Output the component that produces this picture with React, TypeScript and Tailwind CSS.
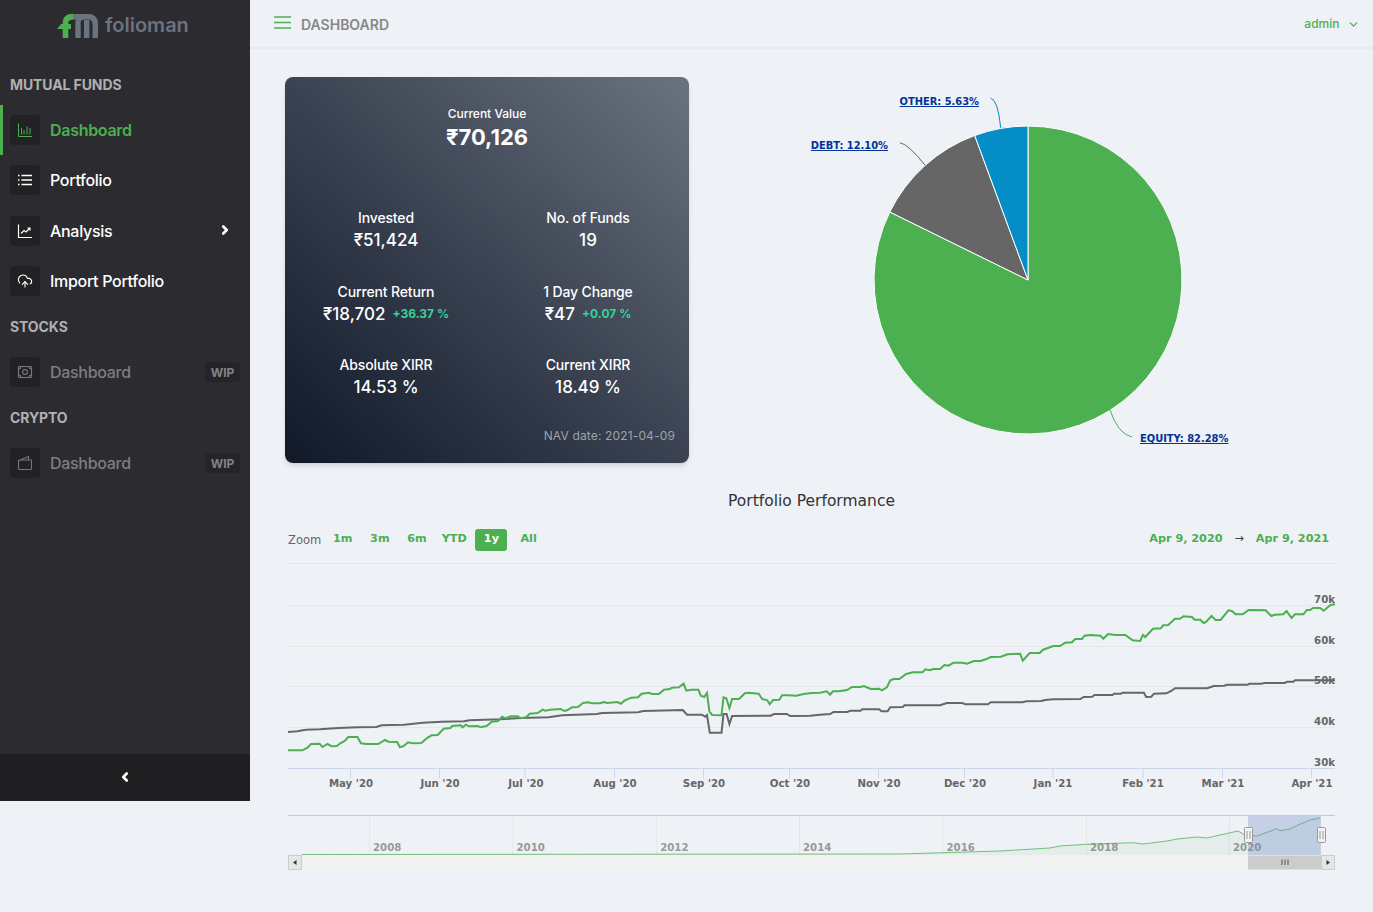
import { CloudUpload, ChevronRight, ChevronLeft, ChevronDown } from "lucide-react";
import type { ReactNode } from "react";

const zl = (a: number[][]) => a.map(([x, y]) => [280 + x / 2.904, 520 + y / 3]);
const zr = (a: number[][]) => a.map(([x, y]) => [820 + x / 2.958, 520 + y / 3]);
const toD = (a: number[][]) => a.map(([x, y], i) => `${i ? "L" : "M"}${x.toFixed(1)} ${y.toFixed(1)}`).join(" ");

const green = [
  ...zl([[23,691],[65,691],[80,683],[90,672],[115,671],[123,681],[138,672],[150,679],[165,678],[175,670],[188,663],[198,651],[225,651],[235,670],[250,672],[285,672],[305,660],[315,665],[340,666],[348,681],[358,679],[372,667],[385,670],[410,669],[430,652],[440,646],[458,645],[475,626],[495,624],[500,618],[525,616],[530,622],[540,614],[548,619],[575,618],[582,622],[600,618],[615,605],[633,603],[645,590],[655,595],[670,589],[690,589],[700,595],[715,592],[725,581],[748,579],[763,569],[770,572],[785,569],[815,567],[825,573],[835,570],[848,562],[865,561],[880,549],[895,547],[905,550],[930,550],[940,546],[950,549],[980,546],[990,551],[1000,542],[1020,533],[1040,532],[1050,521],[1072,518],[1080,522],[1100,522],[1115,509],[1132,507],[1138,503],[1158,502],[1172,491],[1180,512],[1195,509],[1215,509],[1222,527],[1232,531],[1240,519],[1247,575],[1255,585],[1282,586],[1288,532],[1296,535],[1305,564],[1313,537],[1333,537],[1350,520],[1360,518],[1390,521],[1400,537],[1415,541],[1422,553],[1432,540],[1450,539],[1458,526],[1475,526],[1500,527],[1520,522],[1545,519]]),
  ...zr([[0,518],[20,514],[30,524],[38,514],[55,514],[80,510],[95,501],[120,501],[130,498],[150,507],[175,506],[183,511],[198,502],[208,481],[218,477],[235,477],[255,462],[275,457],[303,457],[312,448],[325,451],[335,447],[355,447],[368,435],[380,437],[395,428],[420,428],[435,431],[455,423],[475,423],[490,418],[505,411],[535,410],[555,403],[592,401],[600,422],[620,399],[650,399],[660,389],[690,378],[710,378],[725,368],[745,367],[755,357],[775,357],[782,347],[800,345],[830,347],[838,356],[852,342],[875,345],[903,345],[925,361],[947,363],[955,345],[962,351],[985,326],[1008,325],[1015,316],[1030,315],[1050,296],[1065,296],[1075,289],[1100,291],[1108,299],[1125,299],[1135,309],[1142,306],[1158,288],[1170,300],[1185,300],[1208,271],[1218,273],[1230,283],[1250,283],[1268,270],[1318,271],[1335,288],[1345,284],[1370,283],[1380,273],[1395,294],[1405,283],[1430,283],[1440,270],[1450,270],[1458,264],[1480,264],[1490,272],[1510,255],[1524,253]]),
];
const gray = [
  ...zl([[23,636],[50,634],[75,629],[115,628],[170,624],[225,622],[280,621],[295,616],[360,614],[415,608],[470,605],[535,604],[550,601],[640,598],[700,594],[780,592],[820,586],[920,582],[935,579],[1040,577],[1055,573],[1170,570],[1182,584],[1225,584],[1235,590],[1240,585],[1248,638],[1282,638],[1288,582],[1297,582],[1305,612],[1313,588],[1425,587],[1435,582],[1472,582],[1482,588],[1540,587]]),
  ...zr([[0,584],[30,582],[40,576],[80,576],[90,572],[120,572],[125,568],[175,568],[182,574],[200,574],[208,562],[245,561],[250,556],[355,556],[375,549],[420,549],[430,553],[497,553],[505,547],[600,547],[610,544],[655,543],[665,540],[690,538],[770,537],[780,531],[805,530],[812,525],[865,525],[870,521],[890,521],[895,518],[958,518],[965,531],[980,530],[988,521],[1025,520],[1040,512],[1050,505],[1145,505],[1165,498],[1195,497],[1205,494],[1265,494],[1270,491],[1305,491],[1315,489],[1375,489],[1382,485],[1400,485],[1405,481],[1524,481]]),
];
const nav = [[302,854.5],[900,854],[1000,851],[1050,848],[1060,846],[1086,844.3],[1133,842.7],[1143,844],[1167,841],[1177,839],[1197,837],[1207,838],[1217,835.7],[1238,831],[1245,835],[1257,836],[1277,828.7],[1280,830.7],[1290,829],[1298,825],[1310,820],[1320,818]];

const xLabels = [["May '20",351,350.5],["Jun '20",440,439.5],["Jul '20",526,525],["Aug '20",615,614.5],["Sep '20",704,703.5],["Oct '20",790,789.5],["Nov '20",879,878.5],["Dec '20",965,964.5],["Jan '21",1053,1053],["Feb '21",1143,1143],["Mar '21",1223,1222.5],["Apr '21",1312,1311.5]] as [string, number, number][];
const yLabels = [["70k",603],["60k",644],["50k",684],["40k",725],["30k",766]] as [string, number][];
const navYears = [["2008",369.5],["2010",513],["2012",656.7],["2014",799.5],["2016",943],["2018",1086.5],["2020",1229.5]] as [string, number][];

function pt(deg: number, r = 154) {
  const t = (deg * Math.PI) / 180;
  return `${(1028 + r * Math.sin(t)).toFixed(2)} ${(280 - r * Math.cos(t)).toFixed(2)}`;
}
function slice(a: number, b: number) {
  return `M1028 280 L${pt(a)} A154 154 0 ${b - a > 180 ? 1 : 0} 1 ${pt(b)} Z`;
}

function Row({ icon, label, active, right, disabled, extra }: { icon: ReactNode; label: string; active?: boolean; right?: ReactNode; disabled?: boolean; extra?: string }) {
  const tone = active ? "text-[#4caf50] font-semibold tracking-[-0.3px]" : disabled ? "text-[#7e7e82] font-medium tracking-[-0.3px]" : "text-white font-medium tracking-[-0.3px]";
  const bar = active ? "border-[#4caf50]" : "border-transparent";
  return (
    <div className={`flex h-[50px] items-center border-l-[3px] pl-[7px] pr-[10px] ${bar} ${extra ?? ""}`}>
      <div className={`flex h-[30px] w-[30px] items-center justify-center rounded bg-[#222225] ${active ? "text-[#4caf50]" : disabled ? "text-[#77777b]" : "text-white"}`}>{icon}</div>
      <span className={`ml-[10px] text-base ${tone}`}>{label}</span>
      <div className="ml-auto">{right}</div>
    </div>
  );
}
const Wip = () => <span className="flex h-5 w-[35px] items-center justify-center rounded bg-[#252528] pt-px text-xs font-bold text-[#828286]">WIP</span>;
const Section = ({ children, h }: { children: string; h: string }) => (
  <div className={`flex items-center pl-[10px] text-sm font-bold tracking-[-0.1px] text-[#b0b0b2] ${h}`}>{children}</div>
);

function Stat({ label, value, pct }: { label: string; value: string; pct?: string }) {
  return (
    <div className="text-center">
      <div className="text-sm font-medium leading-5 tracking-[-0.15px] text-white">{label}</div>
      <div className="flex h-6 items-center justify-center text-white">
        <span className="text-[17px] font-medium leading-6">{value}</span>
        {pct && <span className="ml-[7px] text-xs font-bold leading-6 text-[#34d399]">{pct}</span>}
      </div>
    </div>
  );
}

const chartText = "font-['DejaVu_Sans',sans-serif] font-bold text-[10.2px]";
const pieText = "font-['DejaVu_Sans',sans-serif] font-bold text-[9.9px] fill-[#039] underline";

export default function App() {
  return (
    <div className="flex h-[912px] overflow-hidden bg-[#eef1f6] font-['Inter',sans-serif]">
      <aside className="flex h-[801px] w-[250px] shrink-0 flex-col bg-[#2b2b30]">
        <div className="flex h-[65px] items-start">
          <div className="ml-[57px] mt-[13px] flex items-center">
            <svg width="42" height="25" viewBox="57 13 42 25" fill="none">
              <path d="M71 16.8 H84" stroke="#6b7280" strokeWidth="5.6" />
              <path d="M78 38 V22 Q78 16.8 84 16.8 H88 Q95.3 16.8 95.3 24 V38 M86.7 38 V20" stroke="#6b7280" strokeWidth="5.4" />
              <path d="M65.5 38 V23 Q65.5 16.6 73 16.6" stroke="#4caf50" strokeWidth="5.6" />
              <path d="M57 29 L61 24 H71 V29 Z" fill="#4caf50" />
            </svg>
            <span className="ml-[6px] -mt-px text-[20px] font-semibold leading-[26px] text-[#6b7280]">folioman</span>
          </div>
        </div>
        <Section h="h-10">MUTUAL FUNDS</Section>
        <Row
          active
          label="Dashboard"
          icon={
            <svg width="16" height="16" viewBox="0 0 16 16" fill="none" stroke="currentColor" strokeWidth="1">
              <path d="M1.5 1.5 V14.5 H15 M4.5 6 V12.5 M7 8 V12.5 M10 4.5 V12.5 M13 6 V12.5" />
            </svg>
          }
        />
        <Row
          label="Portfolio"
          icon={
            <svg width="16" height="16" viewBox="0 0 16 16" fill="none" stroke="currentColor" strokeWidth="1.3">
              <path d="M4.5 3.5 H15 M4.5 8 H15 M4.5 12.5 H15 M1 3.5 H2.5 M1 8 H2.5 M1 12.5 H2.5" />
            </svg>
          }
        />
        <Row
          extra="mt-px"
          label="Analysis"
          icon={
            <svg width="16" height="16" viewBox="0 0 16 16" fill="none" stroke="currentColor" strokeWidth="1.2">
              <path d="M1.5 1.5 V14.5 H15 M4 10.5 L7 7.5 L9 9 L13 5 M10.5 5 H13 V7.5" />
            </svg>
          }
          right={<ChevronRight size={14} strokeWidth={4.5} className="mr-[8px] -mt-[2px] text-white" />}
        />
        <Row label="Import Portfolio" icon={<CloudUpload size={16} strokeWidth={1.7} />} />
        <Section h="h-[41px]">STOCKS</Section>
        <Row
          disabled
          label="Dashboard"
          icon={
            <svg width="16" height="16" viewBox="0 0 16 16" fill="none" stroke="currentColor" strokeWidth="1.1">
              <rect x="1.5" y="2.5" width="13" height="11" rx="0.8" />
              <circle cx="8" cy="8" r="2.4" />
              <path d="M1.5 5 Q4 5 4 2.5 M14.5 5 Q12 5 12 2.5 M1.5 11 Q4 11 4 13.5 M14.5 11 Q12 11 12 13.5" />
            </svg>
          }
          right={<Wip />}
        />
        <Section h="h-[41px]">CRYPTO</Section>
        <Row
          disabled
          label="Dashboard"
          icon={
            <svg width="16" height="16" viewBox="0 0 16 16" fill="none" stroke="currentColor" strokeWidth="1.1">
              <path d="M2 5.5 L11.5 1.5 V5 M2.5 5 H14 Q14.5 5 14.5 6 V13.5 Q14.5 14.5 13.5 14.5 H2.5 Q1.5 14.5 1.5 13.5 V6 Q1.5 5 2.5 5 Z M11.5 10 H11.9" />
            </svg>
          }
          right={<Wip />}
        />
        <div className="flex-1" />
        <div className="flex h-[47px] items-center justify-center bg-[#1f1f21]">
          <ChevronLeft size={14} strokeWidth={4.5} className="-mt-[1px] text-white" />
        </div>
      </aside>

      <main className="min-w-0 flex-1">
        <header className="flex h-[49px] items-center border-b-2 border-[#e7e9ee] pl-6 pr-[13px]">
          <svg width="17" height="13" viewBox="0 0 17 13" className="-mt-[3px]" fill="none" stroke="#4caf50" strokeWidth="1.6">
            <path d="M0 1 H17 M0 6.5 H17 M0 12 H17" />
          </svg>
          <span className="ml-[10px] mt-[2px] text-sm font-semibold text-[#87878a]">DASHBOARD</span>
          <span className="ml-auto text-xs font-medium text-[#4caf50]">admin</span>
          <ChevronDown size={13} strokeWidth={2.2} className="ml-[7.5px] mt-[1px] text-[#4caf50]" />
        </header>

        <section className="mt-[28px] flex h-[386px]">
          <div className="ml-[35px] h-[386px] w-[404px] shrink-0 rounded-lg bg-linear-to-tr from-[#111827] to-[#6b7280] pt-[29px] shadow-md">
            <div className="text-center text-white">
              <div className="text-xs font-medium leading-4">Current Value</div>
              <div className="-mt-px text-[22px] font-bold leading-8">₹70,126</div>
            </div>
            <div className="mt-[55px] grid grid-cols-2 gap-y-[29.5px]">
              <Stat label="Invested" value="₹51,424" />
              <Stat label="No. of Funds" value="19" />
              <Stat label="Current Return" value="₹18,702" pct="+36.37 %" />
              <Stat label="1 Day Change" value="₹47" pct="+0.07 %" />
              <Stat label="Absolute XIRR" value="14.53 %" />
              <Stat label="Current XIRR" value="18.49 %" />
            </div>
            <div className="mt-[29px] pr-[14px] text-right text-xs leading-4 tracking-[0.15px] text-[#9ca3af]">NAV date: 2021-04-09</div>
          </div>
          <svg width="684" height="386" viewBox="689 77 684 386" className="shrink-0">
            <path d={slice(0, 296.2)} fill="#4caf50" stroke="#fff" />
            <path d={slice(296.2, 339.76)} fill="#666666" stroke="#fff" />
            <path d={slice(339.76, 360)} fill="#058dc7" stroke="#fff" />
            <path d="M990.5 98 Q998 100 1000.7 127.7" fill="none" stroke="#058dc7" />
            <path d="M900 142.7 Q908 144 925 165" fill="none" stroke="#666666" />
            <path d="M1110 410 Q1118 434 1132 437" fill="none" stroke="#4caf50" />
            <text x="979" y="105" textAnchor="end" className={pieText}>OTHER: 5.63%</text>
            <text x="888" y="149" textAnchor="end" className={pieText}>DEBT: 12.10%</text>
            <text x="1140" y="442" className={pieText}>EQUITY: 82.28%</text>
          </svg>
        </section>

        <section className="ml-[38px] mt-[28px] w-[1047px]">
          <div className="pt-px text-center font-['DejaVu_Sans',sans-serif] text-[15.5px] leading-[18px] text-[#333]">Portfolio Performance</div>
          <div className="mt-[19px] flex h-[22px] items-center font-['DejaVu_Sans',sans-serif] text-[11.2px] text-[#4caf50]">
            <span className="mr-[5.5px] mt-[1px] text-[11.5px] text-[#666]">Zoom</span>
            {["1m", "3m", "6m", "YTD", "1y", "All"].map((b) => (
              <span key={b} className={`mr-[5.2px] flex h-[22px] w-[32px] items-center justify-center rounded-[3px] pb-px font-bold ${b === "1y" ? "bg-[#4caf50] text-white" : ""}`}>{b}</span>
            ))}
            <span className="ml-auto pb-px font-bold">Apr 9, 2020</span>
            <span className="mx-[12px] pb-px font-normal text-[#444]">→</span>
            <span className="mr-[6px] pb-px font-bold">Apr 9, 2021</span>
          </div>
          <svg width="1047" height="320" viewBox="288 555 1047 320" className="mt-[4px] block">
            {[563.5, 605.5, 646.5, 686.5, 727.5].map((y) => (
              <line key={y} x1="288" x2="1335" y1={y} y2={y} stroke="#e6e6e6" />
            ))}
            <line x1="288" x2="1335" y1="768.5" y2="768.5" stroke="#ccd6eb" />
            {xLabels.map(([t, x, tick]) => (
              <g key={t}>
                <line x1={tick} x2={tick} y1="768" y2="778" stroke="#ccd6eb" />
                <text x={x} y="787" textAnchor="middle" className={`${chartText} fill-[#666]`}>{t}</text>
              </g>
            ))}
            {yLabels.map(([t, y]) => (
              <text key={t} x="1335" y={y} textAnchor="end" className={`${chartText} fill-[#666]`}>{t}</text>
            ))}
            <path d={toD(gray)} fill="none" stroke="#666666" strokeWidth="2" />
            <path d={toD(green)} fill="none" stroke="#4caf50" strokeWidth="2" />

            {navYears.map(([t, x]) => (
              <g key={t}>
                <line x1={x} x2={x} y1="815" y2="855" stroke="#e6e6e6" />
                <text x={x + 3.5} y="851" className={`${chartText} fill-[#999]`}>{t}</text>
              </g>
            ))}
            <line x1="288" x2="1335" y1="815.5" y2="815.5" stroke="#c6c8cc" />
            <path d={`${toD(nav)} L1320 855 L302 855 Z`} fill="#4caf50" fillOpacity="0.06" />
            <path d={toD(nav)} fill="none" stroke="#4caf50" strokeOpacity="0.75" strokeWidth="1" />
            <rect x="1248" y="816" width="73" height="39" fill="#6685c2" fillOpacity="0.3" />
            <rect x="288" y="855" width="1047" height="15" fill="#f2f2f2" />
            <rect x="288.5" y="855.5" width="13" height="14" fill="#e6e6e6" stroke="#ccc" />
            <path d="M296.5 860 L293 862.5 L296.5 865 Z" fill="#333" />
            <rect x="1248" y="855.5" width="73" height="14" fill="#ccc" />
            <path d="M1282 859.5 V865 M1285 859.5 V865 M1288 859.5 V865" stroke="#666" strokeWidth="1.2" />
            <rect x="1321.5" y="855.5" width="13" height="14" fill="#e6e6e6" stroke="#ccc" />
            <path d="M1326.5 860 L1330 862.5 L1326.5 865 Z" fill="#333" />
            {[1248, 1321].map((x) => (
              <g key={x}>
                <rect x={x - 3.5} y="827.5" width="8" height="15" rx="1" fill="#f2f2f2" stroke="#999" />
                <path d={`M${x - 1} 831 V839 M${x + 2} 831 V839`} stroke="#999" />
              </g>
            ))}
          </svg>
        </section>
      </main>
    </div>
  );
}
